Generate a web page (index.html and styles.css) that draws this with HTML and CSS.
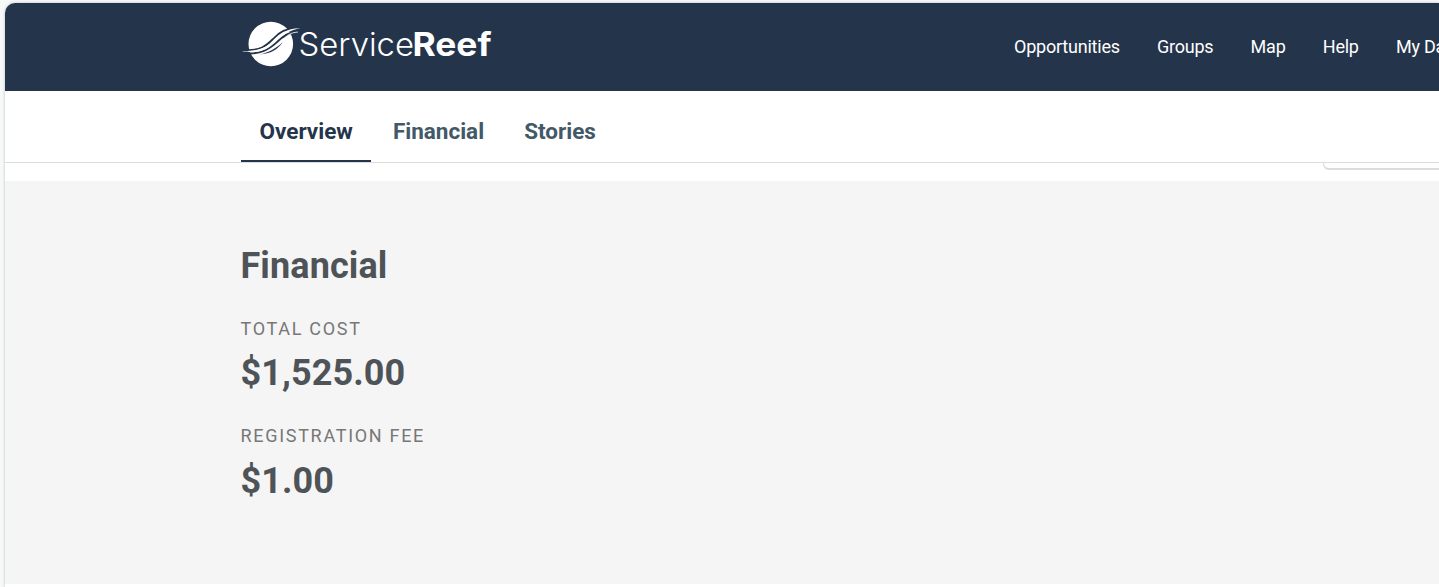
FILE: index.html
```
<!DOCTYPE html>
<html lang="en">
<head>
    <meta charset="UTF-8">
    <meta name="viewport" content="width=device-width, initial-scale=1.0">
    <title>ServiceReef</title>
    <link rel="stylesheet" href="styles.css">
</head>
<body>
    <div class="page">
        <header class="header">
            <a class="logo" href="#">
                <svg width="252" height="50" viewBox="240 20 252 50" role="img" aria-label="ServiceReef">
                    <circle cx="270.8" cy="44" r="22.3" fill="#fff"/>
                    <!-- waves across the globe -->
                    <path d="M244 50 C260 51 266 46 273 39 C279 32 286 28 299 27.500" fill="none" stroke="#24344b" stroke-width="1.8"/>
                    <path d="M244 53 C261 55 269 49 277 42 C284 35 290 32 299 30.500" fill="none" stroke="#24344b" stroke-width="2"/>
                    <path d="M241.500 51 C257 51.500 266 48 273.500 41 C280 34 287 28 300.500 28.300 C290 30 284 34 277 40.500 C268 50 258 54.500 241.500 51 Z" fill="#fff"/>
                    <path d="M259 54.500 C270 52.500 276 48 283 42 C278 49 271 54 259 54.500 Z" fill="#24344b"/>
                    <path d="M285 37.500 C289 34 292 32.500 298 32" fill="none" stroke="#fff" stroke-width="0.8"/>
                    <text class="logo-light" x="298.500" y="55.800" textLength="115.500" lengthAdjust="spacingAndGlyphs">Service</text>
                    <text class="logo-bold" x="412.500" y="55.800" textLength="79" lengthAdjust="spacingAndGlyphs">Reef</text>
                </svg>
            </a>
            <nav class="nav">
                <a href="#">Opportunities</a>
                <a href="#">Groups</a>
                <a href="#">Map</a>
                <a href="#">Help</a>
                <a href="#">My Dashboard</a>
            </nav>
        </header>
        <div class="tabs">
            <a class="tab active" href="#">Overview</a>
            <a class="tab" href="#">Financial</a>
            <a class="tab" href="#">Stories</a>
        </div>
        <div class="strip">
            <div class="card"></div>
        </div>
        <section class="financial">
            <h2>Financial</h2>
            <div class="label">Total Cost</div>
            <div class="amount">$1,525.00</div>
            <div class="label">Registration Fee</div>
            <div class="amount">$1.00</div>
        </section>
    </div>
</body>
</html>
```
FILE: styles.css
```
* {
    box-sizing: border-box;
    margin: 0;
    padding: 0;
}
body {
    height: 100vh;
    padding: 3px 0 0 5px;
    overflow: hidden;
    background-color: #f7f8f8;
    font-family: Roboto, "Liberation Sans", sans-serif;
}
a {
    text-decoration: none;
}
.page {
    height: 584px;
    overflow: hidden;
    background-color: #fff;
    border-top-left-radius: 10px;
    box-shadow: 0 0 3px rgba(0, 0, 0, 0.25);
}
.header {
    display: flex;
    height: 88px;
    padding-left: 235px;
    background-color: #24344b;
}
.logo {
    flex: none;
    width: 252px;
    margin-top: 17px;
}
.logo svg {
    display: block;
}
.logo text {
    fill: #fff;
    font-family: Inter, sans-serif;
    font-size: 32px;
}
.logo .logo-light {
    font-weight: 300;
}
.logo .logo-bold {
    font-weight: 700;
}
.nav {
    display: flex;
    flex: none;
    gap: 37.2px;
    margin-left: 522px;
    line-height: 88px;
    font-size: 18px;
    letter-spacing: -0.22px;
    white-space: nowrap;
}
.nav a {
    color: #fff;
}
.tabs {
    display: flex;
    height: 72px;
    padding-left: 236px;
    border-bottom: 1px solid #dcdcdc;
}
.tab {
    padding: 0 18.5px;
    margin-right: 3px;
    line-height: 80px;
    height: 71px;
    color: #425968;
    font-size: 22.5px;
    font-weight: 700;
}
.tab.active {
    color: #24344b;
    border-bottom: 2px solid #24344b;
}
.strip {
    height: 18px;
    padding-left: 1318px;
    overflow: hidden;
}
.card {
    height: 7px;
    border: 1px solid #dcdcdc;
    border-width: 0 0 2px 1px;
    border-bottom-left-radius: 6px;
}
.financial {
    height: 403px;
    padding: 63px 0 0 235.5px;
    background-color: #f5f5f5;
    color: #4e5358;
}
.financial h2 {
    margin-bottom: 29px;
    line-height: 44px;
    font-size: 36px;
    font-weight: 700;
    letter-spacing: 0.1px;
}
.label {
    line-height: 24px;
    color: #777;
    font-size: 18px;
    letter-spacing: 1.7px;
    text-transform: uppercase;
}
.amount {
    margin: 10px 0 29px;
    line-height: 44px;
    font-size: 36px;
    font-weight: 700;
    letter-spacing: 0.1px;
}
.amount:last-child {
    margin-top: 11px;
}
```
